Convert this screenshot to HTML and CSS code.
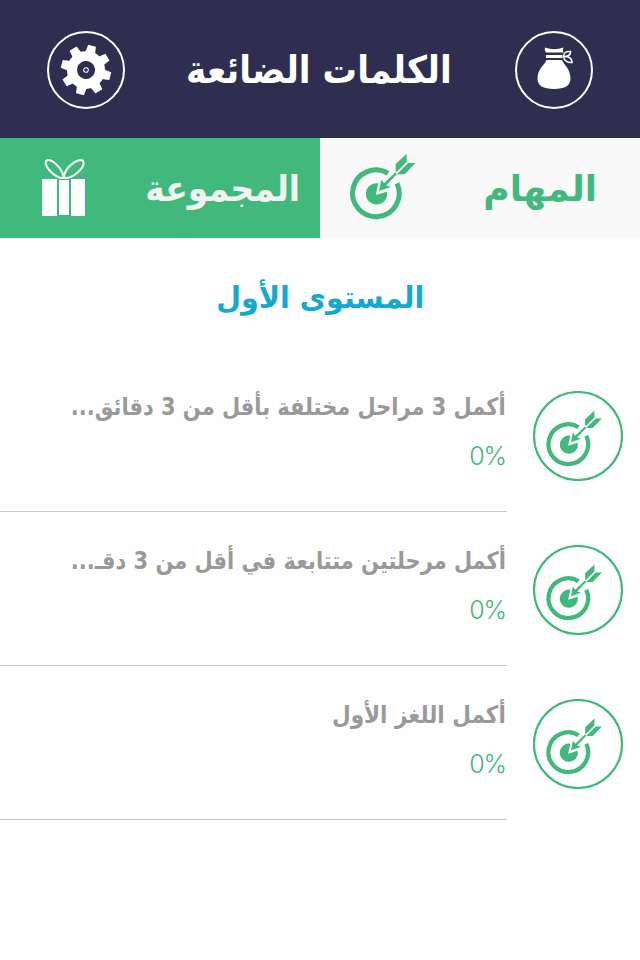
FILE: index.html
```html
<!DOCTYPE html>
<html lang="ar" dir="rtl">

<head>
  <meta charset="UTF-8">
  <meta name="viewport" content="width=device-width, initial-scale=1.0">
  <title>الكلمات الضائعة</title>
  <link rel="stylesheet" href="styles.css">
</head>

<body>
  <!-- shared target icon -->
  <svg class="sprite" width="0" height="0">
    <symbol id="target" viewBox="0 2 270 255">
      <path d="M144 84A70 70 0 1 0 171 114" fill="none" stroke="currentColor" stroke-width="15"/>
      <path d="M115 114A32 32 0 1 0 141 139L107 149Z" fill="currentColor"/>
      <path d="M117 137L124 103L132 114L166 81L171 86L139 120L153 125Z" fill="currentColor"/>
      <path d="M167 77V56L200 25V50L170 80ZM171 87L204 53H226L194 87Z" fill="currentColor"/>
    </symbol>
  </svg>

  <header class="header">
    <svg class="round-icon" viewBox="0 0 78 78">
      <circle cx="39" cy="39" r="38" fill="none" stroke="#fff" stroke-width="2"/>
      <path d="M30 16.500Q39 20 48.500 16.500Q47 19 48.500 21.500H31Q29 19 30 16.500Z" fill="#fff"/>
      <path d="M31 24H47.500V27H31Z" fill="#fff"/>
      <path d="M31.500 29H47C49 34 55.500 38 55.500 47.500C55.500 54.500 50 58 39 58S22.500 54.500 22.500 47.500C22.500 38 29.500 34 31.500 29Z" fill="#fff"/>
      <path d="M48.500 25.500C48.500 22 51 20 55.500 20.500C56 24 52 26 48.500 25.500C53 25 57 27 57 31.500C53 32 49 30 48.500 25.500Z" fill="none" stroke="#fff" stroke-width="1.500"/>
    </svg>
    <h1 class="title">الكلمات الضائعة</h1>
    <svg class="round-icon" viewBox="0 0 78 78">
      <circle cx="39" cy="39" r="38" fill="none" stroke="#fff" stroke-width="2"/>
      <g transform="translate(39 39) rotate(14)">
        <circle r="14" fill="none" stroke="#fff" stroke-width="10"/>
        <g fill="#fff">
          <path id="tooth" d="M-5 -17L-4 -25H4L5 -17Z"/>
          <use href="#tooth" transform="rotate(45)"/>
          <use href="#tooth" transform="rotate(90)"/>
          <use href="#tooth" transform="rotate(135)"/>
          <use href="#tooth" transform="rotate(180)"/>
          <use href="#tooth" transform="rotate(225)"/>
          <use href="#tooth" transform="rotate(270)"/>
          <use href="#tooth" transform="rotate(315)"/>
        </g>
        <circle r="2.300" fill="none" stroke="#fff" stroke-width="1"/>
      </g>
    </svg>
  </header>

  <nav class="tabs">
    <div class="tab tab-tasks">
      <span class="tab-label">المهام</span>
      <svg class="tab-target"><use href="#target"/></svg>
    </div>
    <div class="tab tab-group">
      <span class="tab-label">المجموعة</span>
      <svg class="tab-gift" viewBox="0 0 45 58">
        <path d="M1 20H16V57H1ZM18 21H28V56H18ZM30 20H44V57H30Z" fill="#fff"/>
        <path d="M23 19C14 20 3 7 5 2C9 -2 21 8 23 19ZM23 19C23 8 38 -2 42 2C45 7 33 20 23 19Z" fill="none" stroke="#fff" stroke-width="2"/>
      </svg>
    </div>
  </nav>

  <main>
    <h2 class="level"><span>المستوى الأول</span></h2>
    <div class="task">
      <svg class="task-icon" viewBox="0 0 90 90">
        <circle cx="45" cy="45" r="44" fill="none" stroke="currentColor" stroke-width="2.200"/>
        <use href="#target" x="4.800" y="13" width="76.500" height="72.250"/>
      </svg>
      <div class="task-body">
        <div class="task-name"><span class="name-long">أكمل 3 مراحل مختلفة بأقل من 3 دقائق...</span></div>
        <div class="task-progress" dir="ltr">0%</div>
      </div>
    </div>
    <div class="task">
      <svg class="task-icon" viewBox="0 0 90 90">
        <circle cx="45" cy="45" r="44" fill="none" stroke="currentColor" stroke-width="2.200"/>
        <use href="#target" x="4.800" y="13" width="76.500" height="72.250"/>
      </svg>
      <div class="task-body">
        <div class="task-name"><span class="name-long">أكمل مرحلتين متتابعة في أقل من 3 دقـ...</span></div>
        <div class="task-progress" dir="ltr">0%</div>
      </div>
    </div>
    <div class="task">
      <svg class="task-icon" viewBox="0 0 90 90">
        <circle cx="45" cy="45" r="44" fill="none" stroke="currentColor" stroke-width="2.200"/>
        <use href="#target" x="4.800" y="13" width="76.500" height="72.250"/>
      </svg>
      <div class="task-body">
        <div class="task-name"><span>أكمل اللغز الأول</span></div>
        <div class="task-progress" dir="ltr">0%</div>
      </div>
    </div>
  </main>
</body>

</html>
```
FILE: styles.css
```css
* {
  box-sizing: border-box;
}

body {
  margin: 0;
  background-color: #fefefe;
  font-family: "DejaVu Sans", sans-serif;
  font-weight: bold;
}

.sprite {
  position: absolute;
}

.header {
  display: flex;
  align-items: center;
  justify-content: space-between;
  height: 138px;
  padding: 0 47px;
  background-color: #302e50;
}

.round-icon {
  width: 78px;
  height: 78px;
  margin-top: 2px;
}

.title {
  margin: 2px 2px 0 0;
  color: #fff;
  font-size: 38px;
  line-height: 60px;
  white-space: nowrap;
  transform: scaleX(0.904);
}

.tabs {
  display: flex;
  height: 100px;
}

.tab {
  display: flex;
  align-items: center;
  justify-content: space-between;
  width: 320px;
}

.tab-tasks {
  padding: 0 43px 0 20px;
  background-color: #f9f9f9;
  color: #41b97c;
}

.tab-group {
  padding: 0 20px 0 41px;
  background-color: #41b97c;
  color: #f2f2f2;
}

.tab-label {
  font-size: 36px;
  white-space: nowrap;
}

.tab-group .tab-label {
  transform: scaleX(0.915);
  transform-origin: right;
}

.tab-target {
  width: 90px;
  height: 85px;
}

.tab-gift {
  width: 45px;
  height: 58px;
}

.level {
  margin: 0;
  padding-top: 38px;
  height: 122px;
  color: #16a9d0;
  font-size: 30px;
  line-height: 44px;
  text-align: center;
}

.level span {
  display: inline-block;
  transform: scaleX(0.953);
}

.task {
  display: flex;
  height: 154px;
  padding-right: 17px;
}

.task-icon {
  flex: none;
  width: 90px;
  height: 90px;
  margin: 31px 0 0 26px;
  color: #41b97c;
}

.task-body {
  flex: 1;
  min-width: 0;
  height: 152px;
  padding: 28px 1px 0 0;
  border-bottom: 1px solid #c8c8c8;
}

.task-name {
  height: 40px;
  color: #999;
  font-size: 24px;
  line-height: 38px;
  white-space: nowrap;
}

.task-name span {
  display: inline-block;
  transform: scaleX(0.897);
  transform-origin: right;
}

.task-name .name-long {
  transform: scaleX(0.872);
}

.task-progress {
  color: #41b97c;
  font: 300 25px/56px Inter, sans-serif;
  letter-spacing: -1px;
  text-align: right;
}
```
